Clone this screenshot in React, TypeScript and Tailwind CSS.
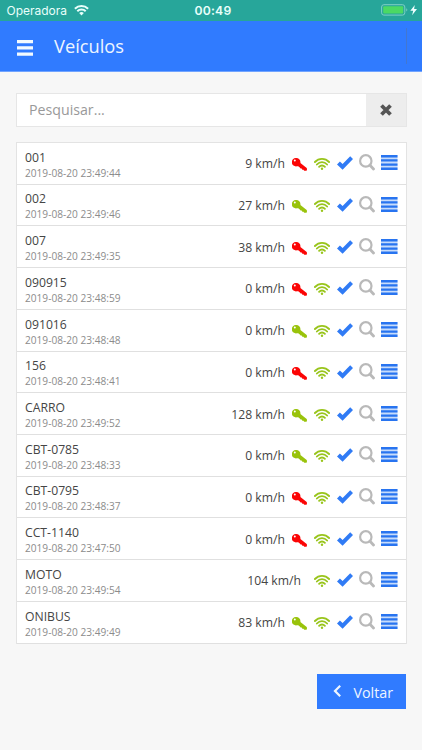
type Vehicle = { name: string; time: string; speed: string; key?: 'on' | 'off' };

const vehicles: Vehicle[] = [
  { name: '001', time: '2019-08-20 23:49:44', speed: '9 km/h', key: 'off' },
  { name: '002', time: '2019-08-20 23:49:46', speed: '27 km/h', key: 'on' },
  { name: '007', time: '2019-08-20 23:49:35', speed: '38 km/h', key: 'off' },
  { name: '090915', time: '2019-08-20 23:48:59', speed: '0 km/h', key: 'off' },
  { name: '091016', time: '2019-08-20 23:48:48', speed: '0 km/h', key: 'on' },
  { name: '156', time: '2019-08-20 23:48:41', speed: '0 km/h', key: 'off' },
  { name: 'CARRO', time: '2019-08-20 23:49:52', speed: '128 km/h', key: 'on' },
  { name: 'CBT-0785', time: '2019-08-20 23:48:33', speed: '0 km/h', key: 'on' },
  { name: 'CBT-0795', time: '2019-08-20 23:48:37', speed: '0 km/h', key: 'off' },
  { name: 'CCT-1140', time: '2019-08-20 23:47:50', speed: '0 km/h', key: 'off' },
  { name: 'MOTO', time: '2019-08-20 23:49:54', speed: '104 km/h' },
  { name: 'ONIBUS', time: '2019-08-20 23:49:49', speed: '83 km/h', key: 'on' },
];

function KeyIcon({ on }: { on: boolean }) {
  return (
    <svg className={`mt-[3px] mr-[7px] h-[13px] w-[15px] ${on ? 'text-[#99c30b]' : 'text-[#fb0505]'}`} viewBox="0 0 15 13" fill="currentColor">
      <path fillRule="evenodd" d="M4.2 0A4.2 4.2 0 1 0 4.9 8.3L6.2 8.2L7.8 9.6L8.6 10.6L9.7 10.6L10.3 11.7L11.5 11.7L12.2 12.7L14.4 12.8C15.1 12.5 15.1 10.6 14.7 9.9L8.4 5C8.9 2.3 7 0 4.2 0ZM2.8 1.6A1 1 0 1 1 2.8 3.6A1 1 0 1 1 2.8 1.6Z" />
    </svg>
  );
}

function SignalIcon() {
  return (
    <svg className="mt-[3px] mr-[7px] h-[12px] w-[16px] text-[#99c51c]" viewBox="0 0 16 12" fill="none" stroke="currentColor" strokeWidth="1.85" strokeLinecap="round">
      <path d="M0.9 4C4.8 -0.1 11.2 -0.1 15.1 4M2.9 6.5C5.7 3.4 10.3 3.4 13.1 6.5M5.1 8.8C6.7 7.1 9.3 7.1 10.9 8.8" />
      <circle cx="8" cy="10.8" r="1.2" fill="currentColor" stroke="none" />
    </svg>
  );
}

function CheckIcon() {
  return (
    <svg className="mt-[1px] mr-[6px] h-[14px] w-[16px] text-[#307bf5]" viewBox="0 0 16 14" fill="currentColor">
      <path d="M0 8.4L2.9 5.5L5.6 8L13.2 0.3L16 3.1L5.6 13.7Z" />
    </svg>
  );
}

function SearchIcon() {
  return (
    <svg className="mt-[-1px] mr-[6px] h-[17px] w-[16px] text-[#b9b9b9]" viewBox="0 0 16 17" fill="none" stroke="currentColor">
      <circle cx="6.8" cy="6.9" r="5.7" strokeWidth="2.2" />
      <path d="M11 11.3L14.5 15" strokeWidth="2.8" strokeLinecap="round" />
    </svg>
  );
}

function RowsIcon() {
  return (
    <svg className="h-[15px] w-[16.5px]" viewBox="0 0 16 15" preserveAspectRatio="none">
      <rect y="0" width="16" height="15" fill="#c7dcfb" />
      <path d="M0 1.2H16M0 5.4H16M0 9.6H16M0 13.8H16" stroke="#2874f0" strokeWidth="2.4" />
    </svg>
  );
}

function StatusBar() {
  return (
    <div className="grid h-[20.5px] shrink-0 grid-cols-3 items-center bg-[#27a69a] text-[#e9fffb]">
      <div className="flex items-center pt-[1px] pl-[6.5px]">
        <span className="font-['Inter',sans-serif] text-[12px] leading-none tracking-[0]">Operadora</span>
        <svg className="ml-[6.5px] h-[11px] w-[15px]" viewBox="0 0 15 11" fill="none" stroke="currentColor" strokeWidth="2">
          <path d="M0.9 3.7C4.6 0.1 10.4 0.1 14.1 3.7M3.3 6.2C5.6 3.9 9.4 3.9 11.7 6.2" />
          <path d="M5.2 8C6.5 6.8 8.5 6.8 9.8 8L7.5 10.4Z" fill="currentColor" stroke="none" />
        </svg>
      </div>
      <span className="pt-[1px] pl-1 text-center font-['Inter',sans-serif] text-[12.2px] leading-none font-semibold tracking-[0.2px]">00:49</span>
      <div className="flex items-center justify-end pr-[4px]">
        <svg className="h-[12px] w-[37px]" viewBox="0 0 37 12">
          <rect x="0.6" y="0.7" width="23.2" height="10.4" rx="2.3" fill="none" stroke="#7fd0c3" />
          <rect x="2.2" y="2.2" width="20" height="7.4" rx="1" fill="#4bd964" />
          <path d="M25.3 4.2Q27.3 5.9 25.3 7.6Z" fill="#7fd0c3" />
          <path d="M33.8 1L29.3 6.7H32.2L31.1 11.2L36 5.1H33.1Z" fill="#efffff" />
        </svg>
      </div>
    </div>
  );
}

export default function App() {
  return (
    <div className="flex h-[750px] w-[422px] flex-col overflow-hidden bg-[#f7f7f7] font-['Open_Sans',sans-serif] text-[#454545]">
      <StatusBar />
      <header className="flex h-[51px] shrink-0 items-center border-b border-[#71a4ff] bg-[#307bff]">
        <svg className="mt-[4px] ml-[17px] h-[16px] w-[16px]" viewBox="0 0 16 16" stroke="#f2faff" strokeWidth="3.2">
          <path d="M0 1.7H16M0 7.9H16M0 14.1H16" />
        </svg>
        <h1 className="mt-[2px] ml-[21px] text-[18.3px] leading-none text-[#edf5ff]">Veículos</h1>
        <div className="mr-[15px] ml-auto h-[36px] w-px bg-[#4377cf]" />
      </header>

      <main className="flex flex-col pt-[21px] pr-[15.5px] pl-4">
        <div className="flex h-[34px] border border-[#e6e6e6] bg-white">
          <input className="min-w-0 flex-1 pb-px pl-[12px] text-[14.2px] leading-none outline-none placeholder:text-[#999]" placeholder="Pesquisar..." />
          <button className="flex w-[40px] items-center justify-center bg-[#ededed]">
            <svg className="h-[12px] w-[12px]" viewBox="0 0 12 12" stroke="#555" strokeWidth="3.8">
              <path d="M1.5 1.5L10.5 10.5M10.5 1.5L1.5 10.5" />
            </svg>
          </button>
        </div>

        <ul className="mt-[15.5px] border-x border-t border-[#e3e3e3] bg-white">
          {vehicles.map((v) => (
            <li key={v.name} className="flex h-[41.73px] justify-between border-b border-[#e0e0e0] pr-[8px] pl-[8px]">
              <div className="pt-[5.7px]">
                <div className="text-[12.2px] leading-[17px]">{v.name}</div>
                <div className="text-[10.15px] leading-[14px] text-[#8c8c8c]">{v.time}</div>
              </div>
              <div className="flex items-start pt-[12.3px]">
                <span className={`text-[12.2px] leading-[17px] ${v.key ? 'mr-[7px]' : 'mr-[13px]'}`}>{v.speed}</span>
                {v.key && <KeyIcon on={v.key === 'on'} />}
                <SignalIcon />
                <CheckIcon />
                <SearchIcon />
                <RowsIcon />
              </div>
            </li>
          ))}
        </ul>

        <button className="mt-[30.5px] mr-[0.5px] flex h-[34.5px] w-[89px] items-center self-end bg-[#307bff] text-[#edf5ff]">
          <svg className="ml-[15.5px] h-[12px] w-[8px]" viewBox="0 0 8 12" fill="none" stroke="currentColor" strokeWidth="2.2">
            <path d="M7.2 0.8L2 6L7.2 11.2" />
          </svg>
          <span className="ml-[13px] pt-[3px] text-[14.3px] leading-none">Voltar</span>
        </button>
      </main>
    </div>
  );
}
